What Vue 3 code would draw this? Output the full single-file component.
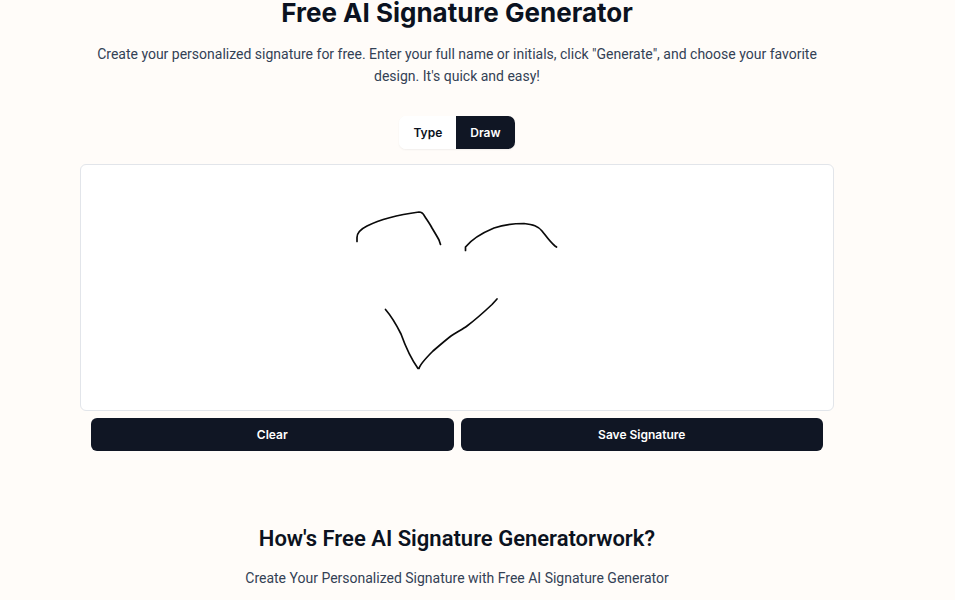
<script setup>
import { ref } from 'vue'

const mode = ref('draw')
const strokes = ref([
  'M276 76.500 L276 72.500 C276 68 280 64 286 61 C300 54 316 50 338 47 C341 47 342 48 343.500 51 C346 55 349 59 351 63 C354 68 357 73 358 75 L359.500 79.500',
  'M384.500 85.500 L384.500 82 C391 74 401 68 413 63 C423 59.500 433 58.500 443 58.500 C452 59.500 457 61 461 66 C465 71 469 77 474 81 L475.500 82',
  'M304.500 144.500 C311 152 316 161 320 169 C325 183 331 195 337 203.500 L338 203.500 C339 199 346 192 352 186 C359 180 366 174 370 171 C376 167 382 164 386 161 C394 155 403 147 411 139.500 L416 134'
])

function clearStrokes() {
  strokes.value = []
}
</script>

<template>
  <main class="page">
    <header class="intro">
      <h1>Free AI Signature Generator</h1>
      <p>Create your personalized signature for free. Enter your full name or initials, click "Generate", and choose your favorite design. It's quick and easy!</p>
    </header>

    <div class="modes" role="group" aria-label="Signature mode">
      <button type="button" :class="{ active: mode === 'type' }" :aria-pressed="mode === 'type'" @click="mode = 'type'">Type</button>
      <button type="button" :class="{ active: mode === 'draw' }" :aria-pressed="mode === 'draw'" @click="mode = 'draw'">Draw</button>
    </div>

    <div class="pad">
      <svg viewBox="0 0 752 245" role="img" aria-label="Signature drawing">
        <path v-for="(d, i) in strokes" :key="i" :d="d" />
      </svg>
    </div>

    <div class="actions">
      <button type="button" @click="clearStrokes">Clear</button>
      <button type="button">Save Signature</button>
    </div>

    <section class="how">
      <h2>How's Free AI Signature Generatorwork?</h2>
      <p>Create Your Personalized Signature with Free AI Signature Generator</p>
    </section>
  </main>
</template>

<style>
body {
  background: #fffcf9;
}
</style>

<style scoped>
.page {
  padding: 0 121px 0 80px;
  color: #0b1220;
  font-family: Roboto, "Liberation Sans", sans-serif;
  text-align: center;
}

h1,
h2,
p {
  margin: 0;
}

h1 {
  font-family: Inter, "Liberation Sans", sans-serif;
  font-size: 26px;
  line-height: 26px;
  font-weight: 700;
}

p {
  color: #334155;
  font-size: 14px;
  line-height: 22px;
}

.intro p {
  margin-top: 17px;
}

.modes {
  display: flex;
  width: fit-content;
  margin: 29px auto 15px;
  overflow: hidden;
  border-radius: 7px;
  background: #fff;
  box-shadow: 0 1px 2px rgb(15 23 42 / 6%);
}

button {
  height: 33px;
  border: 0;
  padding: 0 14px;
  font: 600 12px/20px Inter, "Liberation Sans", sans-serif;
  cursor: pointer;
}

.modes button {
  color: #0b1220;
  background: #fff;
}

.modes .active,
.actions button {
  color: #fff;
  background: #101624;
}

.pad {
  border: 1px solid #e2e5ea;
  border-radius: 6px;
  background: #fff;
}

.pad svg {
  display: block;
  width: 100%;
}

.pad path {
  fill: none;
  stroke: #0a0a0a;
  stroke-width: 1.7;
  stroke-linecap: round;
  stroke-linejoin: round;
}

.actions {
  display: grid;
  grid-template-columns: 1fr 1fr;
  gap: 7px;
  padding: 7px 11px 0;
}

.actions button {
  border-radius: 6px;
}

.how {
  padding: 74px 0 11px;
}

h2 {
  font-size: 22px;
  line-height: 28px;
  font-weight: 600;
}

.how p {
  margin-top: 14px;
}
</style>
